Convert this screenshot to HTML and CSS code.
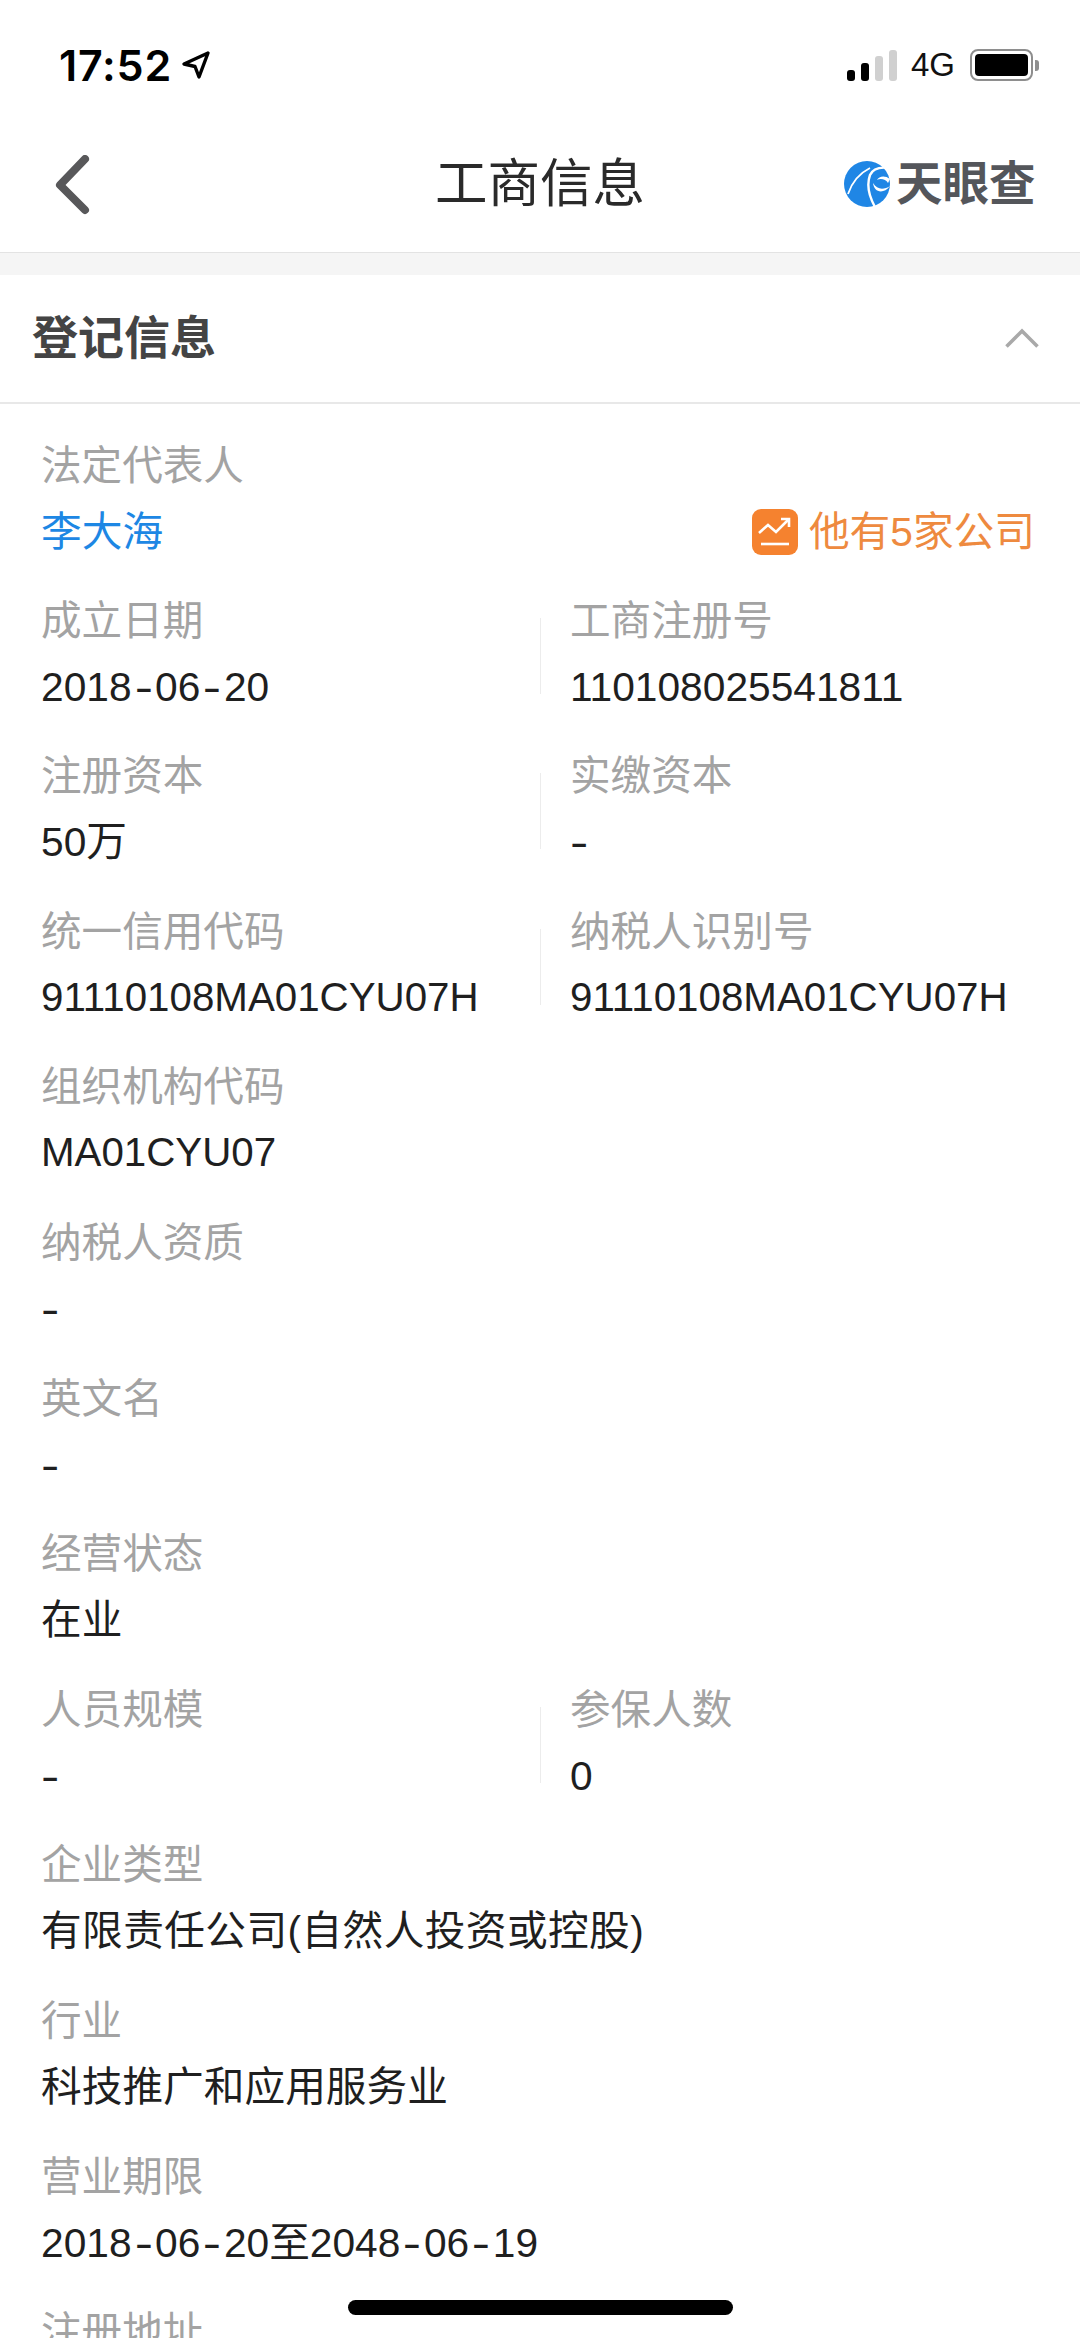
FILE: index.html
```html
<html>
<head>
	<meta charset="utf-8">
	<link rel="stylesheet" href="styles.css">
</head>
<body>

	<div class="status">
		<div class="time">17:52
			<svg class="loc" viewBox="0 0 30 30"><path d="M27 3 3 14l11 2.5L18 27z" fill="none" stroke="#000" stroke-width="3.4" stroke-linejoin="round"/></svg>
		</div>
		<div class="status-right">
			<div class="signal">
				<span class="sig s1"></span>
				<span class="sig s2"></span>
				<span class="sig s3"></span>
				<span class="sig s4"></span>
			</div>
			<span class="net">4G</span>
			<div class="battery"><div class="level"></div></div>
			<div class="nub"></div>
		</div>
	</div>

	<div class="nav">
		<svg class="back" viewBox="0 0 36 60"><path d="M31 4 6 30l25 25" fill="none" stroke="#58585a" stroke-width="8" stroke-linecap="round" stroke-linejoin="round"/></svg>
		<div class="title">工商信息</div>
		<div class="brand">
			<svg class="brand-mark" viewBox="0 0 46 46">
				<circle cx="23" cy="23" r="23" fill="#1f86e5"/>
				<path d="M4 33Q10 15 26 7" fill="none" stroke="#fff" stroke-width="1.800"/>
				<path d="M45 7Q30 5 26 14Q21 28 31 46" fill="none" stroke="#fff" stroke-width="2.400"/>
				<path d="M46 18C41 14 35 15 33 19 36 17 42 18 44 22Z" fill="#fff"/>
				<path d="M29 22C30 31 39 34 46 25 40 29 33 29 29 22Z" fill="#fff"/>
			</svg>
			<span class="brand-name">天眼查</span>
		</div>
	</div>

	<div class="gap"></div>

	<div class="sec-head">
		<h2>登记信息</h2>
		<svg class="collapse" viewBox="0 0 34 20"><path d="M1.5 18.500 17 3l15.500 15.500" fill="none" stroke="#a9a9a9" stroke-width="3.600"/></svg>
	</div>

	<div class="fields">
		<div class="row">
			<div class="field wide">
				<div class="label">法定代表人</div>
				<div class="value link-row">
					<span class="link">李大海</span>
					<span class="companies">
						<svg class="chart" viewBox="0 0 46 46">
							<rect width="46" height="46" rx="9" fill="#f5822f"/>
							<path d="M7 24l9-8 8 7 12-12" fill="none" stroke="#fff" stroke-width="2.600"/>
							<path d="M29 10h8v8" fill="none" stroke="#fff" stroke-width="2.600"/>
							<path d="M9 35h28" stroke="#fff" stroke-width="2.600"/>
						</svg>他有5家公司</span>
				</div>
			</div>
		</div>
		<div class="row split">
			<div class="field">
				<div class="label">成立日期</div>
				<div class="value">2018<i>-</i>06<i>-</i>20</div>
			</div>
			<div class="field">
				<div class="label">工商注册号</div>
				<div class="value">110108025541811</div>
			</div>
		</div>
		<div class="row split">
			<div class="field">
				<div class="label">注册资本</div>
				<div class="value">50万</div>
			</div>
			<div class="field">
				<div class="label">实缴资本</div>
				<div class="value"><i class="alone">-</i></div>
			</div>
		</div>
		<div class="row split">
			<div class="field">
				<div class="label">统一信用代码</div>
				<div class="value code">91110108MA01CYU07H</div>
			</div>
			<div class="field">
				<div class="label">纳税人识别号</div>
				<div class="value code">91110108MA01CYU07H</div>
			</div>
		</div>
		<div class="row">
			<div class="field wide">
				<div class="label">组织机构代码</div>
				<div class="value code">MA01CYU07</div>
			</div>
		</div>
		<div class="row">
			<div class="field wide">
				<div class="label">纳税人资质</div>
				<div class="value"><i class="alone">-</i></div>
			</div>
		</div>
		<div class="row">
			<div class="field wide">
				<div class="label">英文名</div>
				<div class="value"><i class="alone">-</i></div>
			</div>
		</div>
		<div class="row">
			<div class="field wide">
				<div class="label">经营状态</div>
				<div class="value">在业</div>
			</div>
		</div>
		<div class="row split">
			<div class="field">
				<div class="label">人员规模</div>
				<div class="value"><i class="alone">-</i></div>
			</div>
			<div class="field">
				<div class="label">参保人数</div>
				<div class="value">0</div>
			</div>
		</div>
		<div class="row">
			<div class="field wide">
				<div class="label">企业类型</div>
				<div class="value loose">有限责任公司(自然人投资或控股)</div>
			</div>
		</div>
		<div class="row">
			<div class="field wide">
				<div class="label">行业</div>
				<div class="value">科技推广和应用服务业</div>
			</div>
		</div>
		<div class="row">
			<div class="field wide">
				<div class="label">营业期限</div>
				<div class="value">2018<i>-</i>06<i>-</i>20至2048<i>-</i>06<i>-</i>19</div>
			</div>
		</div>
		<div class="row">
			<div class="field wide">
				<div class="label">注册地址</div>
			</div>
		</div>
	</div>

	<div class="home"></div>

</body>
</html>
```

FILE: styles.css
```css
html, body {
	margin: 0;
	height: 2338px;
	overflow: hidden;
}

body {
	position: relative;
	background: #fff;
	font-family: "Liberation Sans", "Noto Sans CJK SC", sans-serif;
	color: #1f1f1f;
}

.status {
	height: 90px;
	padding: 41px 41px 0 59px;
	box-sizing: border-box;
	display: flex;
	justify-content: space-between;
	align-items: flex-start;
}
.time {
	display: flex;
	align-items: center;
	gap: 9px;
	font-family: Inter, "Liberation Sans", sans-serif;
	font-size: 43px;
	font-weight: 600;
	letter-spacing: 0.8px;
	line-height: 48px;
	color: #000;
}
.loc {
	width: 30px;
	height: 30px;
}
.status-right {
	display: flex;
	align-items: center;
	height: 48px;
}
.signal {
	display: flex;
	align-items: flex-end;
	gap: 6px;
	height: 32px;
}
.sig {
	width: 8px;
	border-radius: 3px;
	background: #000;
}
.s1 { height: 11px; }
.s2 { height: 18px; }
.s3 { height: 25px; background: #d0d0d0; }
.s4 { height: 31px; background: #d0d0d0; }
.net {
	font-size: 33px;
	margin: 0 15px 0 14px;
	color: #111;
}
.battery {
	width: 63px;
	height: 32px;
	box-sizing: border-box;
	border: 2px solid #8e8e8e;
	border-radius: 8px;
	padding: 3px;
}
.level {
	height: 100%;
	background: #000;
	border-radius: 4px;
}
.nub {
	width: 4px;
	height: 11px;
	margin-left: 2px;
	background: #8e8e8e;
	border-radius: 0 3px 3px 0;
}

.nav {
	position: relative;
	height: 163px;
	display: flex;
	align-items: center;
	justify-content: center;
	border-bottom: 1px solid #e3e3e3;
	box-sizing: border-box;
	padding-top: 26px;
}
.back {
	position: absolute;
	left: 54px;
	top: 65px;
	width: 36px;
	height: 60px;
}
.title {
	font-size: 52.5px;
	line-height: 60px;
	color: #2a2a2a;
}
.brand {
	position: absolute;
	left: 844px;
	top: 71px;
	display: flex;
	align-items: center;
	gap: 6px;
}
.brand-mark {
	width: 46px;
	height: 46px;
}
.brand-name {
	font-size: 46.500px;
	line-height: 46px;
	font-weight: bold;
	color: #54565b;
}

.gap {
	height: 22px;
	background: #f5f5f5;
}

.sec-head {
	height: 129px;
	box-sizing: border-box;
	border-bottom: 2px solid #e8e8e8;
	padding: 0 41px 10px 32px;
	display: flex;
	align-items: center;
	justify-content: space-between;
}
.sec-head h2 {
	margin: 0;
	font-size: 46px;
	font-weight: bold;
	color: #444;
}
.collapse {
	width: 34px;
	height: 20px;
	margin-top: 9px;
}

.fields {
	padding-top: 29px;
}
.row {
	display: flex;
	padding: 0 45px 0 41px;
	height: 155.6px;
}
.row:first-child {
	height: 154.6px;
}
.field {
	flex: 0 0 529px;
}
.field.wide {
	flex: 1;
}
.split .field + .field {
	position: relative;
}
.split .field + .field::before {
	content: "";
	position: absolute;
	left: -30px;
	top: 30px;
	width: 1px;
	height: 76px;
	background: #ececec;
}
.label {
	font-size: 40.6px;
	line-height: 66px;
	color: #a3a3a3;
}
.value {
	font-size: 40.7px;
	line-height: 66px;
	color: #1f1f1f;
}
.code {
	font-size: 40.3px;
}
.loose {
	letter-spacing: 0.4px;
}
/* the reference font has a wider hyphen */
.value i {
	display: inline-block;
	font-style: normal;
	padding: 0 5px;
	transform: scaleX(1.35);
}
.value i.alone {
	padding: 0;
	transform-origin: left center;
}
.link-row {
	display: flex;
	justify-content: space-between;
	align-items: center;
}
.link {
	color: #1d87e4;
}
.companies {
	display: flex;
	align-items: center;
	gap: 11px;
	color: #ee8a3f;
}
.chart {
	width: 46px;
	height: 46px;
}

.home {
	position: absolute;
	left: 348px;
	top: 2300px;
	width: 385px;
	height: 15px;
	border-radius: 8px;
	background: #000;
}
```
